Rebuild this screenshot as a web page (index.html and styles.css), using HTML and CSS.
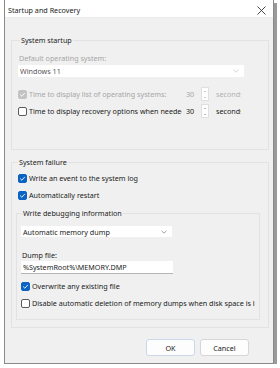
FILE: index.html
```html
<!DOCTYPE html>
<html>
<head>
<meta charset="utf-8">
<link rel="stylesheet" href="styles.css">
</head>
<body>
<div class="window">
  <div class="titlebar">
    <span class="title">Startup and Recovery</span>
    <svg class="close" width="9" height="9" viewBox="0 0 9 9"><path d="M0.5 0.5L8.5 8.5M8.5 0.5L0.5 8.5" stroke="#333" stroke-width="0.9" fill="none"/></svg>
  </div>
  <div class="content">
    <div class="group startup">
      <div class="legend">System startup</div>
      <div class="label disabled os-label">Default operating system:</div>
      <div class="combo os-combo"><span>Windows 11</span><svg class="chev" width="6" height="4" viewBox="0 0 6 4"><path d="M0.5 0.8L3 3.2L5.5 0.8" stroke="#c8c8c8" stroke-width="0.8" fill="none"/></svg></div>
      <div class="timer first disabled">
        <span class="check checked dis"><svg width="9" height="9" viewBox="0 0 9 9"><path d="M2.2 4.6L3.8 6.2L6.9 2.9" stroke="#fff" stroke-width="0.9" fill="none"/></svg></span>
        <span class="timer-text">Time to display list of operating systems:</span>
        <span class="num">30</span>
        <span class="spin"><span class="arr up"></span><span class="arr down"></span></span>
        <span class="unit">seconds</span>
      </div>
      <div class="timer second">
        <span class="check"></span>
        <span class="timer-text">Time to display recovery options when needed:</span>
        <span class="num">30</span>
        <span class="spin"><span class="arr up"></span><span class="arr down"></span></span>
        <span class="unit">seconds</span>
      </div>
    </div>

    <div class="group failure">
      <div class="legend">System failure</div>
      <div class="crow log">
        <span class="check checked"><svg width="9" height="9" viewBox="0 0 9 9"><path d="M2.2 4.6L3.8 6.2L6.9 2.9" stroke="#fff" stroke-width="0.9" fill="none"/></svg></span>
        <span>Write an event to the system log</span>
      </div>
      <div class="crow restart">
        <span class="check checked"><svg width="9" height="9" viewBox="0 0 9 9"><path d="M2.2 4.6L3.8 6.2L6.9 2.9" stroke="#fff" stroke-width="0.9" fill="none"/></svg></span>
        <span>Automatically restart</span>
      </div>
      <div class="group debug">
        <div class="legend">Write debugging information</div>
        <div class="combo dump-combo"><span>Automatic memory dump</span><svg class="chev" width="6" height="4" viewBox="0 0 6 4"><path d="M0.5 0.8L3 3.2L5.5 0.8" stroke="#888" stroke-width="0.8" fill="none"/></svg></div>
        <div class="label dump-label">Dump file:</div>
        <div class="textbox">%SystemRoot%\MEMORY.DMP</div>
        <div class="crow overwrite">
          <span class="check checked"><svg width="9" height="9" viewBox="0 0 9 9"><path d="M2.2 4.6L3.8 6.2L6.9 2.9" stroke="#fff" stroke-width="0.9" fill="none"/></svg></span>
          <span>Overwrite any existing file</span>
        </div>
        <div class="crow disable">
          <span class="check"></span>
          <span class="clip">Disable automatic deletion of memory dumps when disk space is low</span>
        </div>
      </div>
    </div>

    <div class="buttons">
      <button class="btn ok">OK</button>
      <button class="btn">Cancel</button>
    </div>
  </div>
</div>
</body>
</html>
```
FILE: styles.css
```css
* { box-sizing: border-box; }
html, body { margin: 0; padding: 0; background: #fff; }
body {
  font-family: "Noto Sans", "Open Sans", sans-serif;
  font-size: 7.2px;
  color: #1b1b1b;
  line-height: 10px;
}
.window {
  margin-left: 4px;
  width: 270px;
  border-left: 1px solid #8a8a8a;
  border-right: 1px solid #8a8a8a;
  border-bottom: 1px solid #8a8a8a;
  box-shadow: 3px 3px 0 #9a9a9a;
  background: #f0f0f0;
}
.titlebar {
  height: 18px;
  background: #fff;
  display: flex;
  align-items: center;
  justify-content: space-between;
  padding: 3px 5px 0 3px;
  border-bottom: 1px solid #ececec;
}
.title { font-size: 7.2px; }
.close { display: block; margin-right: 2px; }
.content {
  padding: 0 4px 7px 6px;
}
.group {
  border: 1px solid #e2e2e2;
}
.legend {
  width: fit-content;
  margin-top: -6px;
  margin-left: 2px;
  padding: 0 1px;
  background: #f0f0f0;
  height: 10px;
}
.startup {
  margin-top: 22px;
  padding: 0 0 31px 6px;
  height: 110px;
}
.disabled { color: #a6a6a6; }
.os-label { margin-top: 8px; padding-left: 1px; }
.combo {
  display: flex;
  align-items: center;
  justify-content: space-between;
  background: #fff;
  padding: 0 5px 0 2px;
}
.os-combo {
  margin-top: 2px;
  width: 226px;
  height: 12px;
  color: #555;
}
.timer {
  display: flex;
  align-items: center;
  height: 14px;
}
.timer.first { margin-top: 10px; }
.timer.second { margin-top: 3px; }
.check {
  width: 9px;
  height: 9px;
  flex: none;
  border: 0.8px solid #5a5a5a;
  border-radius: 2px;
  background: #fff;
  display: block;
}
.check svg { display: block; margin: -0.8px; }
.check.checked { background: #0b63c4; border-color: #0b63c4; }
.check.checked.dis { background: #c3c3c3; border-color: #c3c3c3; }
.timer-text {
  margin-left: 2px;
  width: 153px;
  overflow: hidden;
  white-space: nowrap;
  flex: none;
}
.num { width: 19px; flex: none; padding-left: 4px; }
.timer.first .num { color: #a6a6a6; }
.spin {
  width: 8px;
  height: 14px;
  flex: none;
  background: #fff;
  border: 0.5px solid #e0e0e0;
  display: flex;
  flex-direction: column;
  align-items: center;
  justify-content: space-around;
}
.arr { width: 0; height: 0; border-left: 1.5px solid transparent; border-right: 1.5px solid transparent; }
.arr.up { border-bottom: 1.8px solid #777; }
.arr.down { border-top: 1.8px solid #777; }
.timer.first .arr.up { border-bottom-color: #999; }
.timer.first .arr.down { border-top-color: #999; }
.unit { margin-left: 7px; white-space: nowrap; width: 25px; overflow: hidden; flex: none; }
.timer.first .unit { color: #b0b0b0; }
.timer.second .unit { color: #222; }
.failure {
  margin-top: 12px;
  padding: 0 8px 7px 4px;
}
.crow {
  display: flex;
  align-items: center;
  height: 10px;
  gap: 2px;
  white-space: nowrap;
}
.failure > .log { margin-top: 6px; margin-left: 2px; }
.failure > .restart { margin-top: 7px; margin-left: 2px; }
.debug {
  margin-top: 13px;
  padding: 0 0 11px 4px;
}
.debug .legend { margin-left: 1px; }
.dump-combo {
  margin-top: 8px;
  width: 151px;
  height: 11px;
}
.dump-label { margin-top: 13px; padding-left: 1px; }
.textbox {
  margin-top: 1px;
  width: 152px;
  height: 13px;
  background: #fff;
  padding: 1px 0 0 2px;
  border-bottom: 1px solid #b5b5b5;
}
.debug .overwrite { margin-top: 7px; }
.debug .disable { margin-top: 7px; }
.clip { width: 223px; overflow: hidden; }
.buttons {
  display: flex;
  justify-content: flex-end;
  gap: 5px;
  margin-top: 11px;
  padding-right: 20px;
}
.btn {
  width: 49px;
  height: 17px;
  font-family: inherit;
  font-size: 7.2px;
  color: #1b1b1b;
  background: #fdfdfd;
  border: 1px solid #d6d6d6;
  border-radius: 3px;
  padding: 0;
}
.btn.ok { border-color: #c9d8ea; }
```
